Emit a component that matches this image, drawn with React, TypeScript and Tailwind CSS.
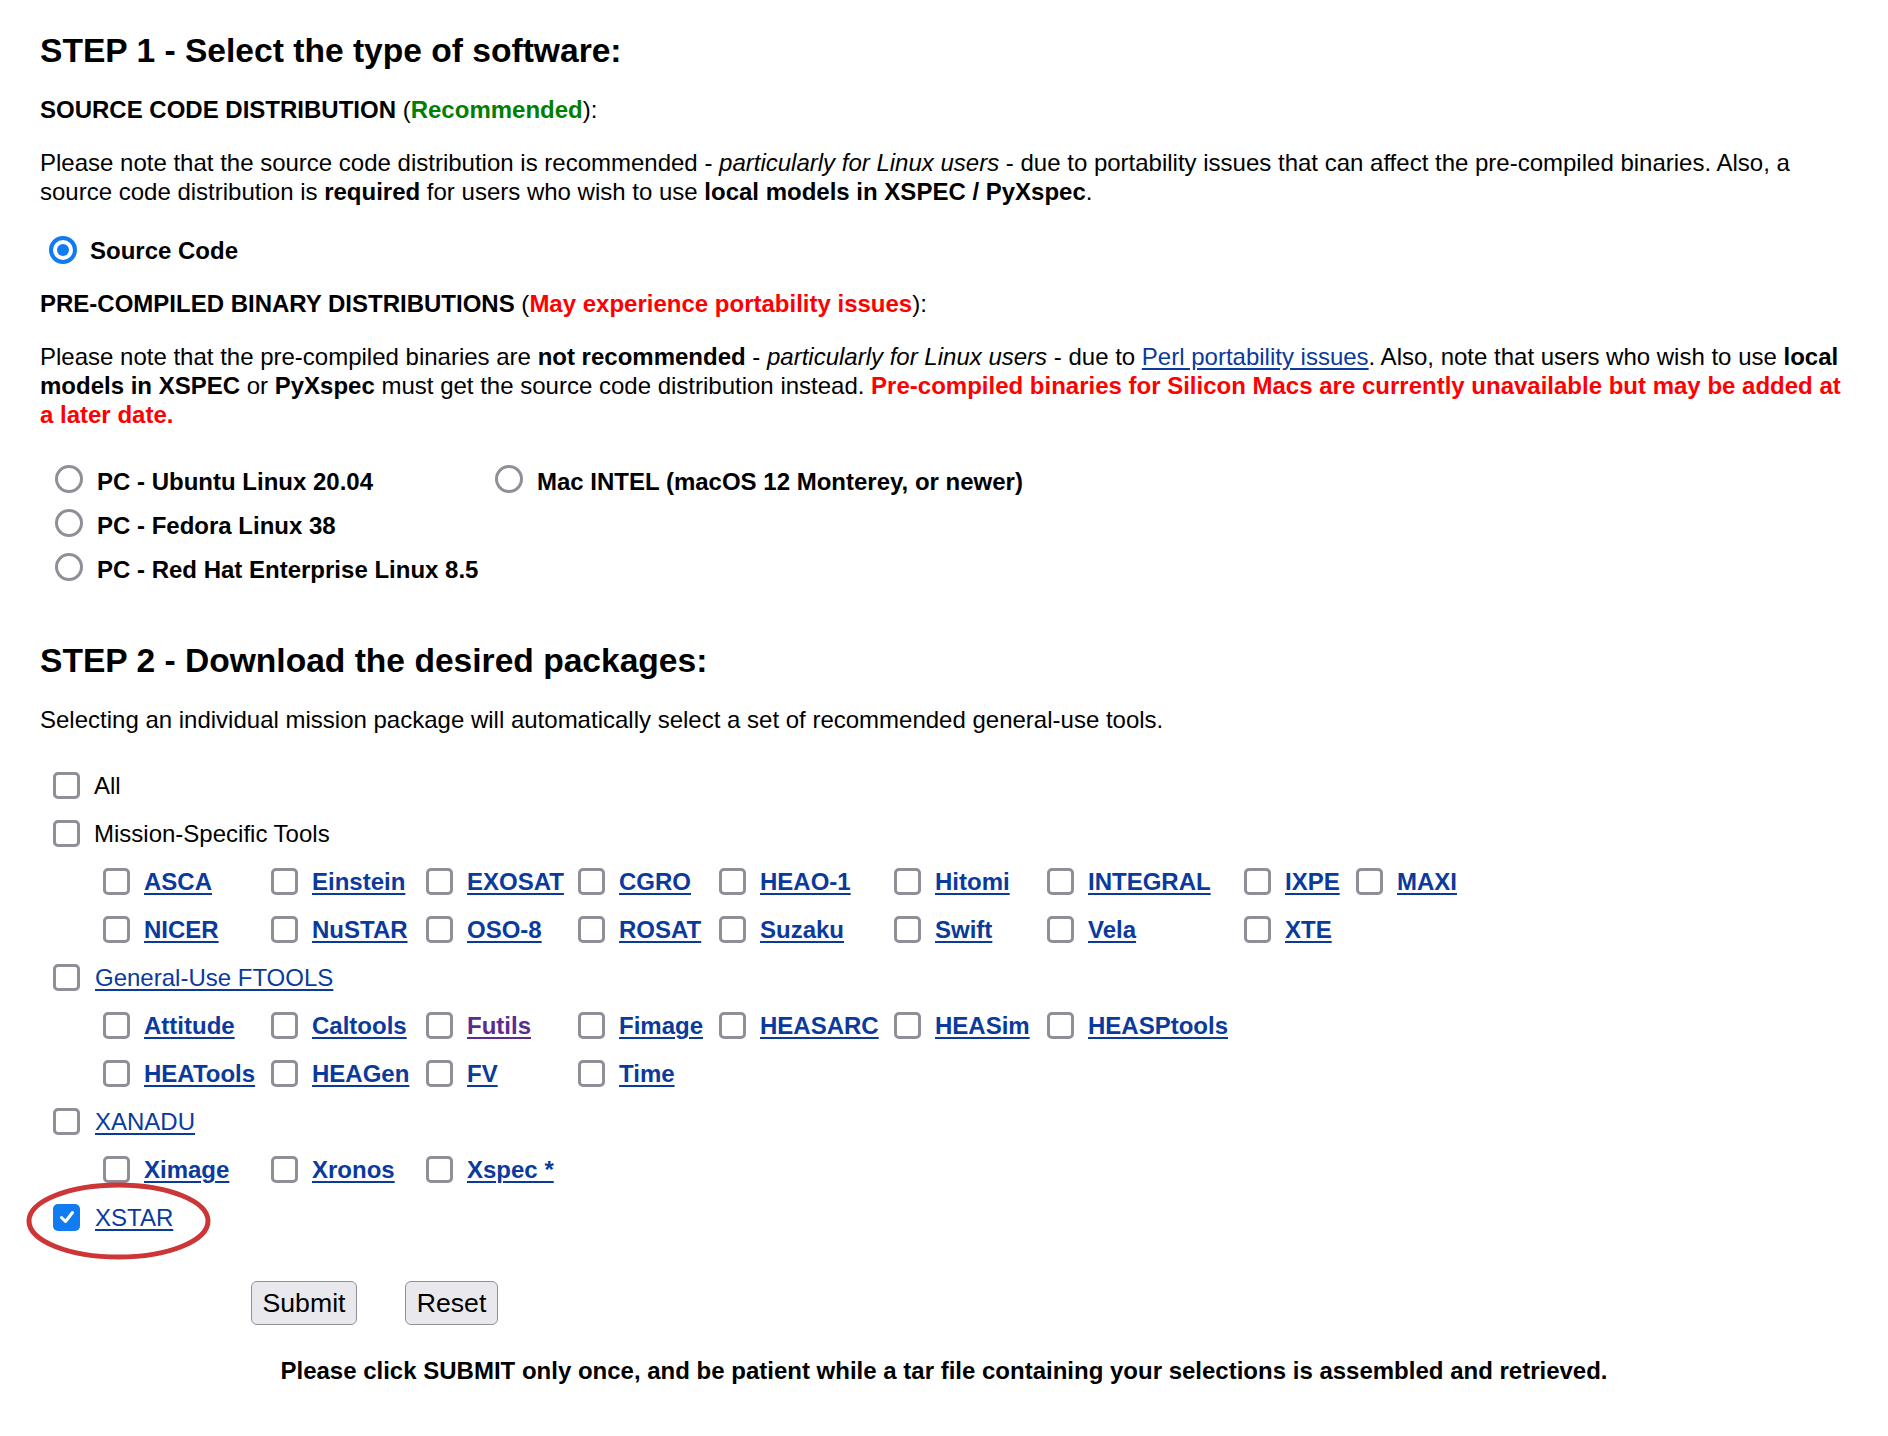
import React from "react";

const LINK = "text-[#0b3a9d] underline underline-offset-[3px]";

const missionCols = ["w-[168px]", "w-[155px]", "w-[152px]", "w-[141px]", "w-[175px]", "w-[153px]", "w-[197px]", "w-[112px]", "w-[120px]"];

const missionRows: (string | null)[][] = [
  ["ASCA", "Einstein", "EXOSAT", "CGRO", "HEAO-1", "Hitomi", "INTEGRAL", "IXPE", "MAXI"],
  ["NICER", "NuSTAR", "OSO-8", "ROSAT", "Suzaku", "Swift", "Vela", "XTE", null],
];

const ftoolRows: (string | null)[][] = [
  ["Attitude", "Caltools", "Futils", "Fimage", "HEASARC", "HEASim", "HEASPtools", null, null],
  ["HEATools", "HEAGen", "FV", "Time", null, null, null, null, null],
];

const xanaduRows: (string | null)[][] = [["Ximage", "Xronos", "Xspec *", null, null, null, null, null, null]];

function Box() {
  return <span className="inline-block h-[27px] w-[27px] shrink-0 rounded-[5px] border-[3px] border-[#8f8e99] bg-white" />;
}

function CheckedBox() {
  return (
    <span className="flex h-[27px] w-[27px] shrink-0 items-center justify-center rounded-[5px] bg-[#117bf2]">
      <svg width="18" height="18" viewBox="0 0 18 18" fill="none">
        <path d="M3.5 9.5 L7.5 13.5 L14.5 4.5" stroke="white" strokeWidth="3" strokeLinecap="round" strokeLinejoin="round" />
      </svg>
    </span>
  );
}

function Radio() {
  return <span className="mb-[5px] inline-block h-[28px] w-[28px] shrink-0 rounded-full border-[3px] border-[#8f8e99] bg-white" />;
}

function RadioOn() {
  return (
    <span className="flex h-[28px] w-[28px] shrink-0 items-center justify-center rounded-full border-[4px] border-[#117bf2] bg-white">
      <span className="h-[12px] w-[12px] rounded-full bg-[#117bf2]" />
    </span>
  );
}

function ToolGrid({ rows }: { rows: (string | null)[][] }) {
  return (
    <div className="ml-[63px]">
      {rows.map((row, r) => (
        <div key={r} className="flex h-[48px]">
          {row.map((name, c) => (
            <div key={c} className={`flex items-center ${missionCols[c]}`}>
              {name && (
                <>
                  <Box />
                  <a
                    className={`ml-[14px] font-bold ${name === "Futils" ? "text-[#5b2c90] underline underline-offset-[3px]" : LINK} decoration-2`}
                  >
                    {name}
                  </a>
                </>
              )}
            </div>
          ))}
        </div>
      ))}
    </div>
  );
}

export default function App() {
  return (
    <div className="min-h-[1436px] bg-white px-[40px] pt-[31px] pb-[40px] text-[24px] leading-[29px] text-black" style={{ fontFamily: '"Liberation Sans", Arial, Helvetica, sans-serif' }}>
      <h1 className="text-[33.6px] font-bold leading-[40px]">STEP 1 - Select the type of software:</h1>

      <p className="mt-[24px]">
        <b>SOURCE CODE DISTRIBUTION</b> (<b className="text-[#008000]">Recommended</b>):
      </p>

      <p className="mt-[24px]">
        Please note that the source code distribution is recommended - <i>particularly for Linux users</i> - due to portability
        issues that can affect the pre-compiled binaries. Also, a source code distribution is <b>required</b> for users who wish to
        use <b>local models in XSPEC / PyXspec</b>.
      </p>

      <div className="mt-[20px] flex h-[48px] items-center pl-[9px]">
        <RadioOn />
        <span className="ml-[13px] font-bold">Source Code</span>
      </div>

      <p className="mt-[15px]">
        <b>PRE-COMPILED BINARY DISTRIBUTIONS</b> (<b className="text-[#ff0000]">May experience portability issues</b>):
      </p>

      <p className="mt-[24px]">
        Please note that the pre-compiled binaries are <b>not recommended</b> - <i>particularly for Linux users</i> - due to{" "}
        <a className="text-[#0b3a9d] underline underline-offset-[3px]">Perl portability issues</a>. Also, note that users who wish to
        use <b>local models in XSPEC</b> or <b>PyXspec</b> must get the source code distribution instead.{" "}
        <b className="text-[#ff0000]">Pre-compiled binaries for Silicon Macs are currently unavailable but may be added at a later date.</b>
      </p>

      <div className="mt-[30px] ml-[15px] grid grid-cols-[440px_auto] font-bold">
        <div className="flex h-[44px] items-center">
          <Radio />
          <span className="ml-[14px]">PC - Ubuntu Linux 20.04</span>
        </div>
        <div className="flex h-[44px] items-center">
          <Radio />
          <span className="ml-[14px]">Mac INTEL (macOS 12 Monterey, or newer)</span>
        </div>
        <div className="flex h-[44px] items-center">
          <Radio />
          <span className="ml-[14px]">PC - Fedora Linux 38</span>
        </div>
        <div />
        <div className="flex h-[44px] items-center">
          <Radio />
          <span className="ml-[14px]">PC - Red Hat Enterprise Linux 8.5</span>
        </div>
        <div />
      </div>

      <h2 className="mt-[50px] text-[33.6px] font-bold leading-[40px]">STEP 2 - Download the desired packages:</h2>

      <p className="mt-[24px]">
        Selecting an individual mission package will automatically select a set of recommended general-use tools.
      </p>

      <div className="mt-[27px]">
        <div className="flex h-[48px] items-center pl-[13px]">
          <Box />
          <span className="ml-[14px]">All</span>
        </div>
        <div className="flex h-[48px] items-center pl-[13px]">
          <Box />
          <span className="ml-[14px]">Mission-Specific Tools</span>
        </div>
        <ToolGrid rows={missionRows} />
        <div className="flex h-[48px] items-center pl-[13px]">
          <Box />
          <a className={`ml-[15px] ${LINK}`}>General-Use FTOOLS</a>
        </div>
        <ToolGrid rows={ftoolRows} />
        <div className="flex h-[48px] items-center pl-[13px]">
          <Box />
          <a className={`ml-[15px] ${LINK}`}>XANADU</a>
        </div>
        <ToolGrid rows={xanaduRows} />
        <div className="relative flex h-[48px] items-center pl-[13px]">
          <CheckedBox />
          <a className={`ml-[15px] ${LINK}`}>XSTAR</a>
          <svg className="pointer-events-none absolute left-[-14px] top-[-11px]" width="185" height="78" viewBox="0 0 185 78" fill="none">
            <ellipse cx="92.5" cy="39" rx="89.5" ry="36" stroke="#cc3636" strokeWidth="5" />
          </svg>
        </div>
      </div>

      <div className="mt-[40px] ml-[211px] flex gap-[48px]">
        <button className="h-[44px] w-[106px] rounded-[6px] border-[1.5px] border-[#8f8f9d] bg-[#e9e9ed] text-[26.67px] leading-[30px] text-black">Submit</button>
        <button className="h-[44px] w-[93px] rounded-[6px] border-[1.5px] border-[#8f8f9d] bg-[#e9e9ed] text-[26.67px] leading-[30px] text-black">Reset</button>
      </div>

      <p className="mt-[31px] text-center font-bold">
        Please click SUBMIT only once, and be patient while a tar file containing your selections is assembled and retrieved.
      </p>
    </div>
  );
}
